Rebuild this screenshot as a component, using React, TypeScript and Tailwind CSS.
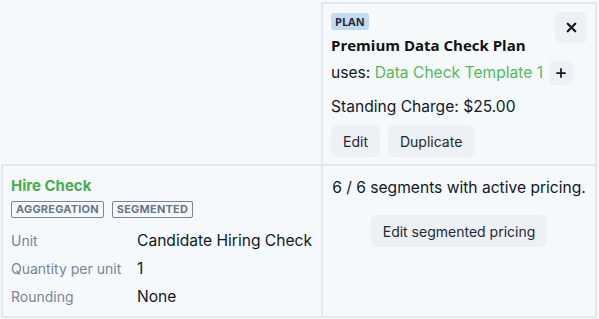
import { X, Plus } from "lucide-react";

function Tag({ children }: { children: React.ReactNode }) {
  return (
    <span className="flex h-[17px] items-center rounded-[2px] border border-[#7a8496] px-[4px] text-[11px] font-bold uppercase leading-none tracking-[0.2px] text-[#6b7588]">
      {children}
    </span>
  );
}

function Btn({ children }: { children: React.ReactNode }) {
  return (
    <button className="h-[32px] rounded-[6px] bg-[#edf0f4] px-[12px] text-[14px] text-[#1f2937]">
      {children}
    </button>
  );
}

export default function App() {
  return (
    <div className="min-h-screen bg-[#f5f9fc] pl-px pt-[2px] font-['Inter',sans-serif] text-[#111827]">
      <div className="flex">
        <div className="w-[320px]" />
        <div className="relative h-[164px] w-[276px] border-2 border-[#e2e8f0] pl-[8px] pt-[9px]">
          <button className="absolute right-[8px] top-[8px] flex h-[31px] w-[32px] items-center justify-center rounded-[6px] bg-[#edf0f4]">
            <X size={15} strokeWidth={3.5} className="text-[#111827]" />
          </button>
          <div className="flex">
            <span className="flex h-[17px] items-center rounded-[3px] bg-[#c3daf3] px-[4px] font-['Open_Sans',sans-serif] text-[11px] font-bold leading-none text-[#1e293b]">
              PLAN
            </span>
          </div>
          <div className="mt-[4px] font-['Open_Sans',sans-serif] text-[15px] font-bold leading-[22px] text-[#111]">
            Premium Data Check Plan
          </div>
          <div className="mt-[5px] flex items-center gap-[6px] text-[15.6px]">
            <span>
              uses: <span className="text-[#56b95a]">Data Check Template 1</span>
            </span>
            <button className="flex h-[24px] w-[24px] items-center justify-center rounded-[5px] bg-[#edf0f4]">
              <Plus size={14} strokeWidth={3} />
            </button>
          </div>
          <div className="mt-[11px] text-[15.6px] leading-[22px]">Standing Charge: $25.00</div>
          <div className="mt-[7px] flex gap-[8px]">
            <Btn>Edit</Btn>
            <Btn>Duplicate</Btn>
          </div>
        </div>
      </div>
      <div className="-mt-[2px] flex">
        <div className="h-[154px] w-[322px] border-2 border-[#e2e8f0] pl-[8px] pt-[10px]">
          <div className="text-[15px] font-bold leading-[20px] text-[#49ad4d]">Hire Check</div>
          <div className="mt-[5px] flex gap-[8px]">
            <Tag>Aggregation</Tag>
            <Tag>Segmented</Tag>
          </div>
          <div className="mt-[12px] grid grid-cols-[126px_1fr] gap-y-[6px] leading-[22px]">
            <span className="text-[14px] text-[#7b8494]">Unit</span>
            <span className="text-[15.6px]">Candidate Hiring Check</span>
            <span className="text-[14px] text-[#7b8494]">Quantity per unit</span>
            <span className="text-[15.6px]">1</span>
            <span className="text-[14px] text-[#7b8494]">Rounding</span>
            <span className="text-[15.6px]">None</span>
          </div>
        </div>
        <div className="-ml-[2px] flex h-[154px] w-[276px] flex-col items-center border-2 border-[#e2e8f0] pt-[11px]">
          <div className="text-[15.6px] leading-[22px]">6 / 6 segments with active pricing.</div>
          <div className="mt-[16px]">
            <Btn>Edit segmented pricing</Btn>
          </div>
        </div>
      </div>
    </div>
  );
}
